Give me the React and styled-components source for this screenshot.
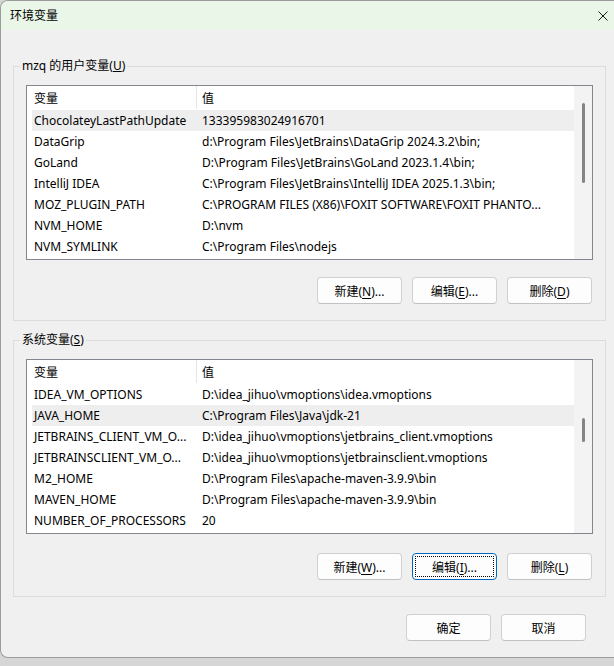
import styled, { createGlobalStyle } from 'styled-components';

const GlobalStyle = createGlobalStyle`
  html, body {
    margin: 0;
    padding: 0;
    background: #d6d6d6;
    overflow: hidden;
  }
  body {
    font-family: "Noto Sans", "Noto Sans CJK SC", sans-serif;
    font-size: 12px;
    color: #000;
  }
`;

const Window = styled.div`
  box-sizing: border-box;
  width: 614px;
  height: 658px;
  background: #f0f0f0;
  border: 1px solid #9c9c9c;
  border-right: none;
  border-radius: 8px 0 0 8px;
  overflow: hidden;
  display: flex;
  flex-direction: column;
`;

const TitleBar = styled.div`
  height: 29px;
  flex-shrink: 0;
  background: #eaf6e8;
  display: flex;
  align-items: center;
  justify-content: space-between;
  padding: 0 6px 0 9px;
`;

const Title = styled.span`
  font-size: 12px;
  line-height: 16px;
`;

const CloseIcon = () => (
  <svg width="10" height="10" viewBox="0 0 10 10">
    <path d="M0.5 0.5 L9.5 9.5 M9.5 0.5 L0.5 9.5" stroke="#1a1a1a" strokeWidth="1" fill="none" />
  </svg>
);

const Body = styled.div`
  display: flex;
  flex-direction: column;
  padding: 28px 0 0 12px;
`;

const Group = styled.fieldset`
  box-sizing: border-box;
  width: 593px;
  margin: ${p => p.$first ? '0' : '11px'} 0 0 0;
  padding: 11px 12px 16px 12px;
  border: 1px solid #dcdcdc;
  display: flex;
  flex-direction: column;
  min-width: 0;
`;

const Legend = styled.legend`
  padding: 0 2px;
  margin-left: -6px;
  line-height: 16px;
  font-size: 12px;
`;

const ListView = styled.div`
  box-sizing: border-box;
  height: 175px;
  border: 1px solid #82878f;
  background: #fff;
  display: flex;
`;

const ListContent = styled.div`
  flex: 1;
  min-width: 0;
  display: flex;
  flex-direction: column;
`;

const HeaderRow = styled.div`
  height: 24px;
  display: grid;
  grid-template-columns: 170px 1fr;
  align-items: stretch;
`;

const HeaderCell = styled.div`
  box-sizing: border-box;
  display: flex;
  align-items: center;
  padding-left: ${p => p.$first ? '7px' : '5px'};
  border-right: ${p => p.$first ? '1px solid #e5e5e5' : 'none'};
  margin-bottom: 1px;
`;

const Row = styled.div`
  height: 21px;
  margin-left: 5px;
  display: grid;
  grid-template-columns: 164px 1fr;
  align-items: center;
  background: ${p => p.$selected ? '#eeeeee' : 'transparent'};
`;

const Cell = styled.div`
  padding-left: ${p => p.$first ? '2px' : '6px'};
  white-space: nowrap;
  overflow: hidden;
  line-height: 21px;
`;

const ScrollTrack = styled.div`
  width: 18px;
  flex-shrink: 0;
  background: #f3f3f3;
  display: flex;
  flex-direction: column;
  align-items: flex-start;
  padding-left: 8px;
  box-sizing: border-box;
`;

const ScrollThumb = styled.div`
  width: 3px;
  border-radius: 2px;
  background: #858585;
`;

const ButtonRow = styled.div`
  display: flex;
  justify-content: flex-end;
  gap: 10px;
  margin-top: ${p => p.$gap || 18}px;
  padding-right: ${p => p.$right || 1}px;
`;

const Button = styled.button`
  box-sizing: border-box;
  width: 85px;
  height: 27px;
  padding: 0;
  font-family: "Noto Sans", "Noto Sans CJK SC", sans-serif;
  font-size: 12px;
  color: #000;
  background: #fdfdfd;
  border: 1px solid ${p => p.$focused ? '#0067c0' : '#d0d0d0'};
  border-bottom-color: ${p => p.$focused ? '#0067c0' : '#c2c2c2'};
  border-radius: 4px;
  outline: ${p => p.$focused ? '1px dotted #000' : 'none'};
  outline-offset: -4px;
  cursor: default;

  u {
    text-decoration: underline;
    text-underline-offset: 2px;
  }
`;

const userVars = [
  ['ChocolateyLastPathUpdate', '133395983024916701'],
  ['DataGrip', 'd:\\Program Files\\JetBrains\\DataGrip 2024.3.2\\bin;'],
  ['GoLand', 'D:\\Program Files\\JetBrains\\GoLand 2023.1.4\\bin;'],
  ['IntelliJ IDEA', 'C:\\Program Files\\JetBrains\\IntelliJ IDEA 2025.1.3\\bin;'],
  ['MOZ_PLUGIN_PATH', 'C:\\PROGRAM FILES (X86)\\FOXIT SOFTWARE\\FOXIT PHANTO...'],
  ['NVM_HOME', 'D:\\nvm'],
  ['NVM_SYMLINK', 'C:\\Program Files\\nodejs'],
];

const systemVars = [
  ['IDEA_VM_OPTIONS', 'D:\\idea_jihuo\\vmoptions\\idea.vmoptions'],
  ['JAVA_HOME', 'C:\\Program Files\\Java\\jdk-21'],
  ['JETBRAINS_CLIENT_VM_O...', 'D:\\idea_jihuo\\vmoptions\\jetbrains_client.vmoptions'],
  ['JETBRAINSCLIENT_VM_O...', 'D:\\idea_jihuo\\vmoptions\\jetbrainsclient.vmoptions'],
  ['M2_HOME', 'D:\\Program Files\\apache-maven-3.9.9\\bin'],
  ['MAVEN_HOME', 'D:\\Program Files\\apache-maven-3.9.9\\bin'],
  ['NUMBER_OF_PROCESSORS', '20'],
];

const VarList = ({ rows, selected, thumbTop, thumbHeight }) => (
  <ListView>
    <ListContent>
      <HeaderRow>
        <HeaderCell $first>变量</HeaderCell>
        <HeaderCell>值</HeaderCell>
      </HeaderRow>
      {rows.map(([name, value], i) => (
        <Row key={name} $selected={i === selected}>
          <Cell $first>{name}</Cell>
          <Cell>{value}</Cell>
        </Row>
      ))}
    </ListContent>
    <ScrollTrack>
      <ScrollThumb style={{ marginTop: thumbTop, height: thumbHeight }} />
    </ScrollTrack>
  </ListView>
);

export default function App() {
  return (
    <>
      <GlobalStyle />
      <Window>
        <TitleBar>
          <Title>环境变量</Title>
          <CloseIcon />
        </TitleBar>
        <Body>
          <Group $first>
            <Legend>mzq 的用户变量(<u>U</u>)</Legend>
            <VarList rows={userVars} selected={0} thumbTop={17} thumbHeight={80} />
            <ButtonRow $gap={17}>
              <Button>新建(<u>N</u>)...</Button>
              <Button>编辑(<u>E</u>)...</Button>
              <Button>删除(<u>D</u>)</Button>
            </ButtonRow>
          </Group>
          <Group>
            <Legend>系统变量(<u>S</u>)</Legend>
            <VarList rows={systemVars} selected={1} thumbTop={58} thumbHeight={24} />
            <ButtonRow $gap={19}>
              <Button>新建(<u>W</u>)...</Button>
              <Button $focused>编辑(<u>I</u>)...</Button>
              <Button>删除(<u>L</u>)</Button>
            </ButtonRow>
          </Group>
          <ButtonRow $gap={17} $right={28}>
            <Button>确定</Button>
            <Button>取消</Button>
          </ButtonRow>
        </Body>
      </Window>
    </>
  );
}
